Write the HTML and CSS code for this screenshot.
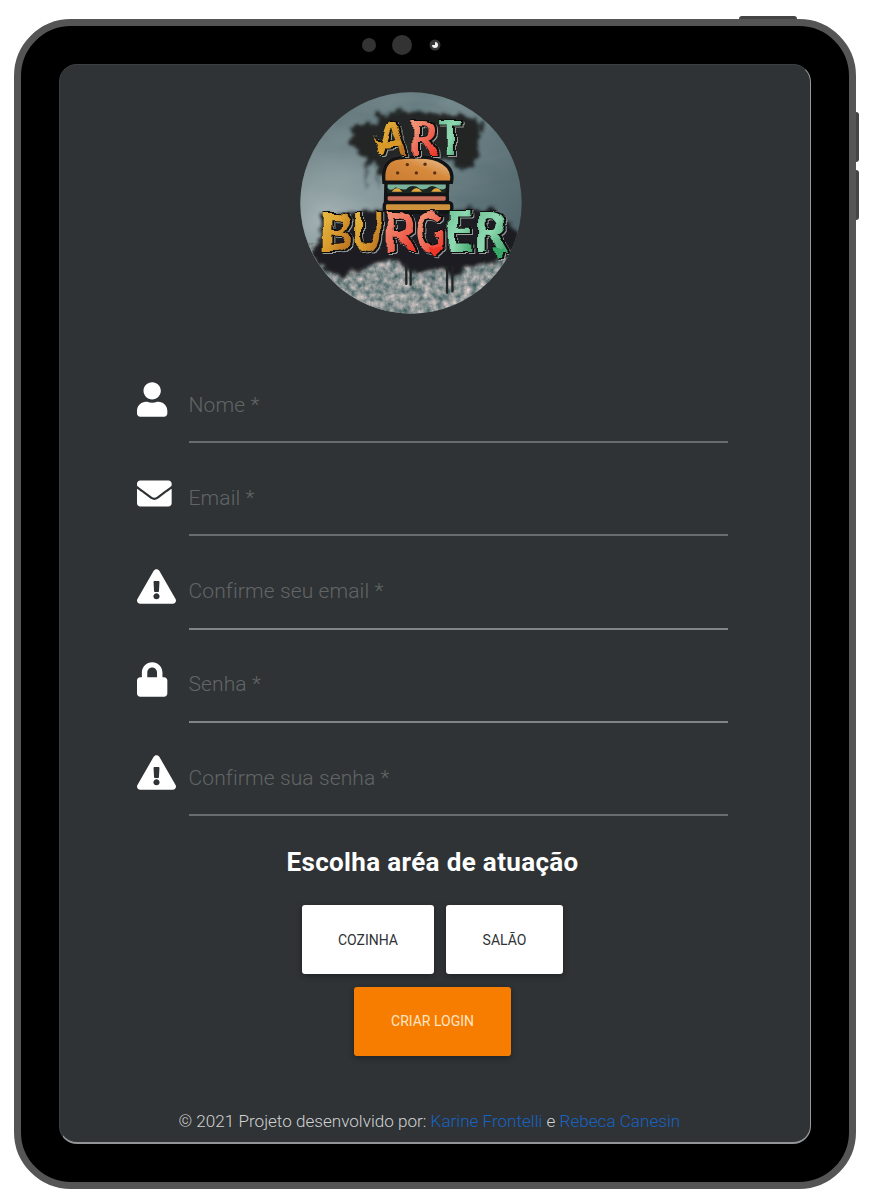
FILE: index.html
```html
<!DOCTYPE html>
<html lang="pt-BR">
<head>
<meta charset="utf-8">
<title>Art Burger</title>
<link rel="stylesheet" href="styles.css">
</head>
<body>
<div class="tablet">
  <span class="key key-power"></span><span class="key key-up"></span><span class="key key-down"></span>
  <div class="camera-bar"><i class="sensor"></i><i class="sensor big"></i><svg class="lens" viewBox="0 0 12 12"><circle cx="6" cy="6" r="5.5" fill="#353535"/><path d="M6 3a3 3 0 1 1-3 3h3z" fill="#f2f2f2"/></svg></div>
  <main class="screen">
    <svg class="logo" viewBox="30 36 664 664" role="img" aria-label="Art Burger">
      <defs>
        <clipPath id="disc"><circle cx="362" cy="368" r="331"/></clipPath>
        <linearGradient id="wall" x1="0" y1="0" x2="1" y2=".7"><stop offset="0" stop-color="#5c7074"/><stop offset=".45" stop-color="#7b8f92"/><stop offset="1" stop-color="#4d6268"/></linearGradient>
        <radialGradient id="light" cx=".12" cy=".58" r=".5"><stop offset="0" stop-color="#b5c2c3" stop-opacity=".8"/><stop offset="1" stop-color="#93a3a5" stop-opacity="0"/></radialGradient>
        <linearGradient id="gold" x1="0" y1="0" x2="1" y2="1"><stop offset="0" stop-color="#edca4c"/><stop offset=".5" stop-color="#d99a2d"/><stop offset="1" stop-color="#a95d1d"/></linearGradient>
        <linearGradient id="red" x1="0" y1="0" x2=".7" y2="1"><stop offset="0" stop-color="#f7ac88"/><stop offset=".5" stop-color="#ee7963"/><stop offset="1" stop-color="#ee3428"/></linearGradient>
        <linearGradient id="green" x1="0" y1="0" x2="1" y2="1"><stop offset="0" stop-color="#6bbd91"/><stop offset=".5" stop-color="#8fd9b2"/><stop offset="1" stop-color="#279755"/></linearGradient>
        <linearGradient id="bun" x1="0" y1="1" x2="1" y2="0"><stop offset="0" stop-color="#c87a30"/><stop offset=".55" stop-color="#d78a3c"/><stop offset="1" stop-color="#ecc9a3"/></linearGradient>
        <filter id="rough" x="-10%" y="-10%" width="120%" height="120%"><feTurbulence type="fractalNoise" baseFrequency=".04" numOctaves="3" seed="4" result="n"/><feDisplacementMap in="SourceGraphic" in2="n" scale="38" xChannelSelector="R" yChannelSelector="G"/><feGaussianBlur stdDeviation="5"/></filter>
        <filter id="brush" x="-5%" y="-10%" width="110%" height="120%" color-interpolation-filters="sRGB">
          <feTurbulence type="fractalNoise" baseFrequency=".018" numOctaves="2" seed="8" result="n"/>
          <feDisplacementMap in="SourceGraphic" in2="n" scale="26" xChannelSelector="R" yChannelSelector="G" result="letters"/>
          <feMorphology in="letters" operator="dilate" radius="3"/><feColorMatrix values="0 0 0 0 .74  0 0 0 0 .77  0 0 0 0 .76  0 0 0 .75 0"/><feOffset dx="5" dy="4" result="rim"/>
          <feMorphology in="letters" operator="dilate" radius="4"/><feColorMatrix values="0 0 0 0 .05  0 0 0 0 .06  0 0 0 0 .06  0 0 0 1 0"/><feOffset dx="2" dy="1" result="shade"/>
          <feMerge><feMergeNode in="rim"/><feMergeNode in="shade"/><feMergeNode in="letters"/></feMerge><feGaussianBlur stdDeviation="1.5"/>
        </filter>
        <filter id="grain" x="0" y="0" width="100%" height="100%" color-interpolation-filters="sRGB"><feTurbulence type="fractalNoise" baseFrequency=".05" numOctaves="4" seed="3"/><feColorMatrix values=".85 0 0 0 .13  .6 0 0 0 .29  .58 0 0 0 .3  0 0 0 0 1"/><feComposite in2="SourceGraphic" operator="in"/><feGaussianBlur stdDeviation="1.5"/></filter>
        <filter id="haze" x="0" y="0" width="100%" height="100%" color-interpolation-filters="sRGB"><feTurbulence type="fractalNoise" baseFrequency=".006 .016" numOctaves="3" seed="12"/><feColorMatrix values="0 0 0 0 .32  0 0 0 0 .42  0 0 0 0 .44  .9 0 0 0 -.32"/></filter>
      </defs>
      <g clip-path="url(#disc)">
        <rect x="30" y="36" width="664" height="664" fill="url(#wall)"/>
        <rect x="30" y="36" width="664" height="664" filter="url(#haze)"/>
        <rect x="30" y="36" width="664" height="664" fill="url(#light)"/>
        <path filter="url(#grain)" d="M30 480L150 500 340 530 560 545 694 520V700H30z"/>
        <g filter="url(#rough)" fill="#1b1e20">
          <path d="M262 102L340 92 430 98 560 112 575 135 566 185 560 235 536 268 500 262 470 235 300 245 268 290 250 248 215 240 196 212 180 186 190 160 184 140 262 128z" opacity=".92"/>
          <path d="M225 240L229 335 236 240zM258 250L262 340 270 250z" opacity=".6"/>
          <path d="M92 404L260 390 480 385 600 388 655 425 685 470 665 535 596 550 540 560 494 580 470 576 440 558 395 580 350 565 310 535 260 545 205 570 128 590 62 520 95 490z"/>
        </g>
        <path d="M348 550V610M361 565V612M470 560V636M486 560V632" stroke="#222526" stroke-width="7" stroke-linecap="round"/>
        <g stroke="#121416" stroke-width="10">
          <path d="M281 306C272 220 336 232 384 231 438 230 494 251 483 306z" fill="url(#bun)"/>
          <path d="M287 308H472L468 396H285z" fill="#1b2522"/>
          <path d="M292 313H466V323Q454 333 439 322 422 311 410 325 392 332 378 319 360 313 348 327 328 329 316 321 303 335 292 323z" fill="#79b29b" stroke="none"/>
          <path d="M304 334Q320 313 336 334zM362 334Q378 313 395 334zM422 334Q438 313 454 334z" fill="#e1a83d" stroke="none"/>
          <rect x="287" y="343" width="184" height="23" rx="9" fill="#c96d5b"/>
          <rect x="282" y="367" width="202" height="27" rx="9" fill="#ce913c"/>
        </g>
        <g fill="#593013"><circle cx="322" cy="278" r="5"/><circle cx="351" cy="253" r="5"/><circle cx="378" cy="278" r="5"/><circle cx="404" cy="252" r="5"/><circle cx="433" cy="278" r="5"/></g>
        <g class="lettering" filter="url(#brush)">
          <text x="260" y="224" textLength="90" lengthAdjust="spacingAndGlyphs" fill="url(#gold)">A</text><text x="356" y="224" textLength="86" lengthAdjust="spacingAndGlyphs" fill="url(#red)">R</text><text x="444" y="222" textLength="74" lengthAdjust="spacingAndGlyphs" fill="url(#green)">T</text>
          <path d="M249 170Q262 188 286 186L335 184 336 198 284 203 254 220 260 198z" fill="#d89928"/>
          <g class="wide"><text x="86" y="514" textLength="102" lengthAdjust="spacingAndGlyphs" fill="url(#gold)">B</text><text x="190" y="514" textLength="88" lengthAdjust="spacingAndGlyphs" fill="url(#gold)">U</text><text x="281" y="514" textLength="93" lengthAdjust="spacingAndGlyphs" fill="url(#red)">R</text><text x="377" y="516" textLength="84" lengthAdjust="spacingAndGlyphs" fill="url(#red)">G</text><text x="464" y="512" textLength="84" lengthAdjust="spacingAndGlyphs" fill="url(#green)">E</text><text x="551" y="512" textLength="98" lengthAdjust="spacingAndGlyphs" fill="url(#green)">R</text></g>
          <path d="M418 500H460L450 514 434 528 424 514z" fill="#ee3528"/><path d="M606 500H639L623 535H612z" fill="#36a867"/>
        </g>
      </g>
    </svg>
    <form class="form">
      <label class="field"><svg viewBox="0 0 576 512"><path d="M224 256c70.7 0 128-57.3 128-128S294.7 0 224 0 96 57.3 96 128s57.3 128 128 128zm89.6 32h-16.7c-22.2 10.2-46.9 16-72.9 16s-50.6-5.8-72.9-16h-16.7C60.2 288 0 348.2 0 422.4V464c0 26.5 21.5 48 48 48h352c26.5 0 48-21.5 48-48v-41.6c0-74.2-60.2-134.4-134.4-134.4z"/></svg><span class="line"><span>Nome *</span></span></label>
      <label class="field mail"><svg viewBox="0 0 576 512"><path d="M502.3 190.8c3.9-3.1 9.7-.2 9.7 4.7V400c0 26.5-21.5 48-48 48H48c-26.5 0-48-21.5-48-48V195.6c0-5 5.7-7.8 9.7-4.7 22.4 17.4 52.1 39.5 154.1 113.6 21.1 15.4 56.7 47.8 92.2 47.6 35.7.3 72-32.8 92.3-47.6 102-74.1 131.6-96.3 154-113.7zM256 320c23.2.4 56.6-29.2 73.4-41.4 132.7-96.3 142.8-104.7 173.4-128.7 5.8-4.5 9.2-11.5 9.2-18.9v-19c0-26.5-21.5-48-48-48H48c-26.5 0-48 21.5-48 48v19c0 7.4 3.4 14.3 9.2 18.9 30.6 23.9 40.7 32.4 173.4 128.7 16.8 12.2 50.2 41.8 73.4 41.4z"/></svg><span class="line"><span>Email *</span></span></label>
      <label class="field crisp"><svg viewBox="0 0 576 512"><path d="M569.517 440.013C587.975 472.007 564.806 512 527.94 512H48.054c-36.937 0-59.999-40.055-41.577-71.987L246.423 23.985c18.467-32.009 64.72-31.951 83.154 0l239.94 416.028zM288 354c-25.405 0-46 20.595-46 46s20.595 46 46 46 46-20.595 46-46-20.595-46-46-46zm-43.673-165.346l7.418 136c.347 6.364 5.609 11.346 11.982 11.346h48.546c6.373 0 11.635-4.982 11.982-11.346l7.418-136c.375-6.874-5.098-12.654-11.982-12.654h-63.383c-6.884 0-12.356 5.78-11.981 12.654z"/></svg><span class="line"><span>Confirme seu email *</span></span></label>
      <label class="field crisp"><svg viewBox="0 0 576 512"><path d="M400 224h-24v-72C376 68.2 307.8 0 224 0S72 68.2 72 152v72H48c-26.5 0-48 21.5-48 48v192c0 26.5 21.5 48 48 48h352c26.5 0 48-21.5 48-48V272c0-26.5-21.5-48-48-48zm-104 0H152v-72c0-39.7 32.3-72 72-72s72 32.3 72 72v72z"/></svg><span class="line"><span>Senha *</span></span></label>
      <label class="field"><svg viewBox="0 0 576 512"><path d="M569.517 440.013C587.975 472.007 564.806 512 527.94 512H48.054c-36.937 0-59.999-40.055-41.577-71.987L246.423 23.985c18.467-32.009 64.72-31.951 83.154 0l239.94 416.028zM288 354c-25.405 0-46 20.595-46 46s20.595 46 46 46 46-20.595 46-46-20.595-46-46-46zm-43.673-165.346l7.418 136c.347 6.364 5.609 11.346 11.982 11.346h48.546c6.373 0 11.635-4.982 11.982-11.346l7.418-136c.375-6.874-5.098-12.654-11.982-12.654h-63.383c-6.884 0-12.356 5.78-11.981 12.654z"/></svg><span class="line"><span>Confirme sua senha *</span></span></label>
    </form>
    <h2 class="title">Escolha aréa de atuação</h2>
    <div class="buttons"><button class="btn kitchen">COZINHA</button><button class="btn hall">SALÃO</button></div>
    <button class="btn create">CRIAR LOGIN</button>
    <footer class="footer">© 2021 Projeto desenvolvido por: <a>Karine Frontelli</a> e <a>Rebeca Canesin</a></footer>
  </main>
</div>
</body>
</html>
```
FILE: styles.css
```css
* { box-sizing: border-box; }
body { margin: 0; padding: 19px 0 0 14px; background: #fff; font-family: Roboto, sans-serif; }
.tablet { position: relative; width: 842px; height: 1170px; border: 7px solid #555; border-radius: 57px; background: #000; padding: 0 38px; }
.key { position: absolute; background: #444; }
.key-power { top: -10px; left: 718px; width: 58px; height: 3px; border-radius: 3px 3px 0 0; }
.key-up, .key-down { left: 835px; width: 3px; height: 50px; border-radius: 0 3px 3px 0; }
.key-up { top: 86px; }
.key-down { top: 144px; }
.camera-bar { display: flex; align-items: center; height: 38px; padding-left: 303px; }
.sensor { width: 14px; height: 14px; border-radius: 50%; background: #333; }
.sensor.big { width: 20px; height: 20px; margin: 0 17px 0 16px; }
.lens { width: 12px; height: 12px; }
.screen { width: 752px; height: 1080px; border: 1px solid #3d4042; border-right-color: #999; border-bottom: 2px solid #929496; border-radius: 18px; background: #2f3335; display: flex; flex-direction: column; align-items: flex-start; overflow: hidden; }
.logo { width: 222px; height: 222px; margin: 27px 0 0 240px; flex: none; }
.lettering { font: 900 136px Lato, sans-serif; }
.lettering .wide { font-size: 164px; }
.form { margin: 68px 0 0 77px; width: 591px; }
.field { display: grid; grid-template-columns: 51.5px 1fr; height: 93.3px; }
.field svg { width: 39px; height: 35px; fill: #fff; }
.mail svg { margin-top: 1px; }
.line { height: 61px; border-bottom: 2px solid #696c6f; color: #626566; font-size: 21px; font-weight: 300; line-height: 24px; padding-top: 11px; letter-spacing: .12px; }
.crisp .line { border-bottom-color: #828588; padding-top: 10px; }
.title { margin: -2px 0 0 226.5px; color: #fff; font-size: 26px; line-height: 32px; letter-spacing: .35px; font-weight: 700; white-space: nowrap; }
.buttons { display: flex; gap: 12px; margin: 27px 0 12.5px 242px; }
.btn { height: 69px; padding: 0; border: 0; border-radius: 3px; background: #fff; color: #303336; font: 400 14px Roboto, sans-serif; box-shadow: 0 2px 6px #0005; }
.kitchen { width: 132px; }
.hall { width: 117px; }
.create { width: 157px; margin-left: 294px; background: #f77d00; color: #ffe5c8; }
.footer { margin: 54px 0 0 118.5px; color: #d0d2d3; font-size: 17.1px; font-weight: 300; line-height: 22px; white-space: nowrap; }
.footer a { color: #1763c4; }
```
